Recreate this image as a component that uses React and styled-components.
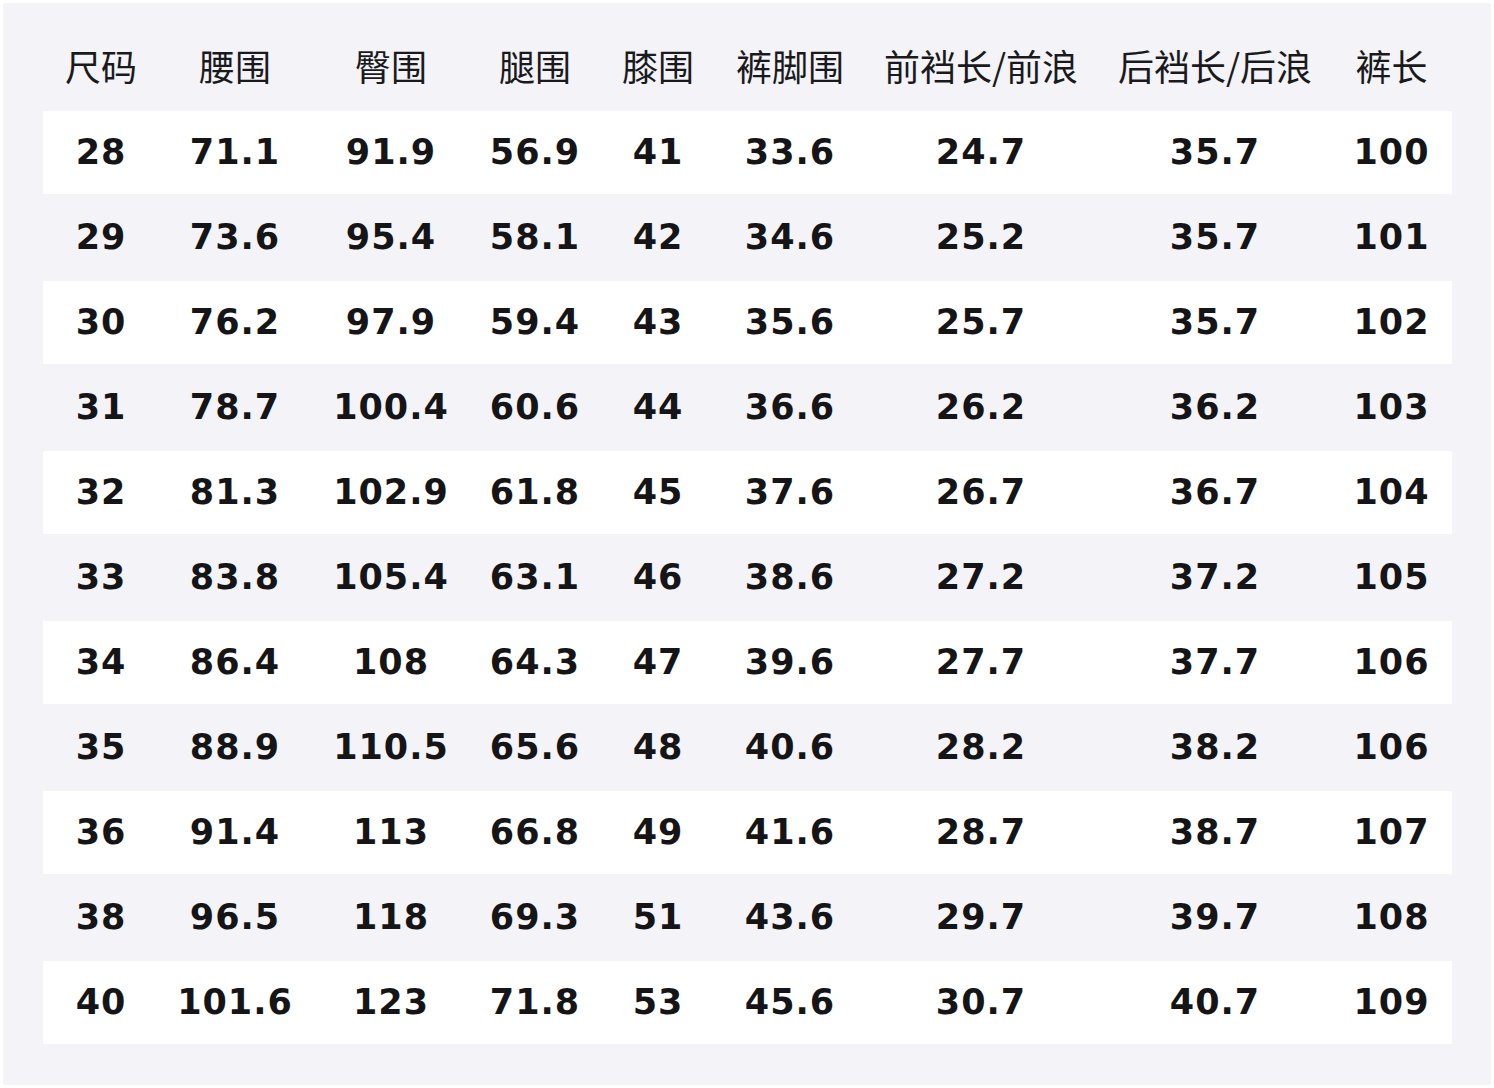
import React from "react";
import styled, { createGlobalStyle } from "styled-components";

const Global = createGlobalStyle`
  html, body { margin: 0; padding: 0; background: #ffffff; }
  body { font-family: "DejaVu Sans", "Noto Sans CJK SC", sans-serif; }
`;

const Panel = styled.div`
  margin: 3px 3px 0 3px;
  width: 1488px;
  height: 1082px;
  box-sizing: border-box;
  background: #f3f3f8;
  border-radius: 3px;
  padding: 22px 39px 0 40px;
`;

const COLS = "116px 152px 160px 128px 118px 146px 236px 232px 121px";

const HeaderRow = styled.div`
  display: grid;
  grid-template-columns: ${COLS};
  height: 85px;
  align-items: center;
`;

const HeadCell = styled.div`
  text-align: center;
  font-family: "Noto Sans CJK SC", "Noto Sans", sans-serif;
  font-size: 36px;
  font-weight: 400;
  color: #1a1a1c;
  white-space: nowrap;
  padding-bottom: 6px;
`;

const Row = styled.div`
  display: grid;
  grid-template-columns: ${COLS};
  height: 85px;
  box-sizing: border-box;
  align-items: center;
  border-top: 1px solid #f3f3f8;
  border-bottom: 1px solid #f3f3f8;
  background: ${(p) => (p.$white ? "#ffffff" : "#f3f3f8")};
`;

const Cell = styled.div`
  text-align: center;
  font-family: "DejaVu Sans", sans-serif;
  font-weight: 700;
  font-size: 35px;
  letter-spacing: 1px;
  color: #151517;
  white-space: nowrap;
  padding-bottom: 1px;
`;

const headers = ["尺码", "腰围", "臀围", "腿围", "膝围", "裤脚围", "前裆长/前浪", "后裆长/后浪", "裤长"];

const rows = [
  ["28", "71.1", "91.9", "56.9", "41", "33.6", "24.7", "35.7", "100"],
  ["29", "73.6", "95.4", "58.1", "42", "34.6", "25.2", "35.7", "101"],
  ["30", "76.2", "97.9", "59.4", "43", "35.6", "25.7", "35.7", "102"],
  ["31", "78.7", "100.4", "60.6", "44", "36.6", "26.2", "36.2", "103"],
  ["32", "81.3", "102.9", "61.8", "45", "37.6", "26.7", "36.7", "104"],
  ["33", "83.8", "105.4", "63.1", "46", "38.6", "27.2", "37.2", "105"],
  ["34", "86.4", "108", "64.3", "47", "39.6", "27.7", "37.7", "106"],
  ["35", "88.9", "110.5", "65.6", "48", "40.6", "28.2", "38.2", "106"],
  ["36", "91.4", "113", "66.8", "49", "41.6", "28.7", "38.7", "107"],
  ["38", "96.5", "118", "69.3", "51", "43.6", "29.7", "39.7", "108"],
  ["40", "101.6", "123", "71.8", "53", "45.6", "30.7", "40.7", "109"],
];

export default function App() {
  return (
    <>
      <Global />
      <Panel>
        <HeaderRow>
          {headers.map((h) => (
            <HeadCell key={h}>{h}</HeadCell>
          ))}
        </HeaderRow>
        {rows.map((r, i) => (
          <Row key={i} $white={i % 2 === 0}>
            {r.map((v, j) => (
              <Cell key={j}>{v}</Cell>
            ))}
          </Row>
        ))}
      </Panel>
    </>
  );
}
